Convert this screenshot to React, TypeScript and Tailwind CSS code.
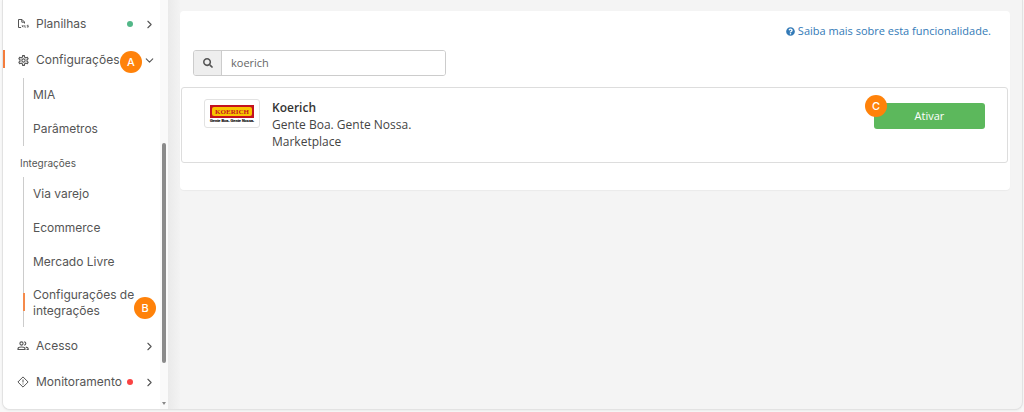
import { useState } from 'react'
import type { ReactNode } from 'react'
import { ChevronDown, ChevronRight } from 'lucide-react'
import { FaQuestionCircle, FaSearch } from 'react-icons/fa'
import { MdOutlineSettings } from 'react-icons/md'
import { clsx } from 'clsx'

function SheetIcon() {
  return (
    <svg viewBox="0 0 12 12" className="w-3 h-3" fill="none" stroke="currentColor">
      <path d="M4 9.500H1.500V1.500h3.500L7.500 4v1.500M4.800 1.500V4.200H7.500" />
      <path d="M5 7.200l1.400 2M6.400 7.200l-1.400 2M7.800 7v2.200h1M11.500 7.300h-1.300v.8h1.100v1h-1.400" strokeWidth=".8" />
    </svg>
  )
}

function PeopleIcon() {
  return (
    <svg viewBox="0 0 12 12" className="w-3 h-3" fill="none" stroke="currentColor" strokeWidth="1.100">
      <circle cx="4.500" cy="3.500" r="1.600" />
      <path d="M1 9.500V8.700C1 7.500 3 7 4.500 7S8 7.500 8 8.700v.8z" />
      <path d="M7.200 1.900a1.600 1.600 0 0 1 0 3.200M8.800 7.100c1.300.2 2.400.8 2.400 1.700v.7H9.500" />
    </svg>
  )
}

function AlertIcon() {
  return (
    <svg viewBox="0 0 12 12" className="w-3 h-3" fill="none" stroke="currentColor">
      <path d="M6 .9 11.100 6 6 11.100 .9 6z" strokeLinejoin="round" />
      <path d="M6 3.500v3M6 7.500v1" />
    </svg>
  )
}

function KoerichLogo() {
  return (
    <svg viewBox="0 0 46 18" className="w-[46px] shrink-0" role="img" aria-label="Koerich">
      <rect x="1" width="44" height="13" fill="#c4121f" />
      <rect x="3" y="2" width="40" height="9" rx="2" fill="#f8c400" />
      <text x="23" y="9" textAnchor="middle" fontFamily="Liberation Serif, serif" fontWeight="700" fontSize="7" fill="#c4121f">
        KOERICH
      </text>
      <text x="23" y="17" textAnchor="middle" fontFamily="Liberation Sans, sans-serif" fontWeight="700" fontSize="3.700" fill="#111" stroke="#111" strokeWidth=".2">
        Gente Boa. Gente Nossa.
      </text>
    </svg>
  )
}

function Marker({ children, className }: { children: ReactNode; className: string }) {
  return (
    <span className={clsx('absolute z-10 flex size-[22px] items-center justify-center rounded-full bg-[#ff820a] font-[Inter,sans-serif] text-[11px] font-medium text-white', className)}>
      {children}
    </span>
  )
}

interface MenuItemProps {
  icon: ReactNode
  label: string
  dot?: string
  open?: boolean
  marker?: ReactNode
}

function MenuItem({ icon, label, dot, open, marker }: MenuItemProps) {
  return (
    <div className="relative">
      <button type="button" aria-expanded={!!open} className="flex h-9 w-full items-center pl-3.5 pr-1">
        <span className="flex w-[19px] shrink-0">{icon}</span>
        <span className="flex-1 text-left">{label}</span>
        {dot && <span className={clsx('mr-2.5 size-1.5 rounded-full', dot)} />}
        {open ? <ChevronDown size={13} /> : <ChevronRight size={13} />}
      </button>
      {open && <span className="absolute left-0 top-2 h-[18px] w-0.5 bg-[#f47c3c]" />}
      {marker}
    </div>
  )
}

function SubItem({ children, active }: { children: ReactNode; active?: boolean }) {
  return (
    <li className="relative">
      <a href="#" className={clsx('block pl-[9px]', active ? 'py-2 leading-4' : 'leading-[34px]')}>
        {children}
      </a>
      {active && <span className="absolute -left-px top-[14px] h-[18px] w-0.5 bg-[#f58a4b]" />}
    </li>
  )
}

function Sidebar() {
  return (
    <aside className="flex w-[165px] shrink-0 bg-white font-[Inter,sans-serif] text-xs text-[#555]">
      <nav className="min-w-0 flex-1 pt-1.5 pb-[9px]">
        <MenuItem icon={<SheetIcon />} label="Planilhas" dot="bg-[#52b788]" />
        <MenuItem
          icon={<MdOutlineSettings size={13} />}
          label="Configurações"
          open
          marker={<Marker className="right-[18px] top-[9px]">A</Marker>}
        />
        <ul className="ml-5 border-l border-[#ccc]">
          <SubItem>MIA</SubItem>
          <SubItem>Parâmetros</SubItem>
        </ul>
        <h2 className="pl-[17px] pt-[9px] pb-1.5 text-[10px] leading-4">Integrações</h2>
        <ul className="mb-px ml-5 border-l border-[#ccc]">
          <SubItem>Via varejo</SubItem>
          <SubItem>Ecommerce</SubItem>
          <SubItem>Mercado Livre</SubItem>
          <SubItem active>
            Configurações de
            <br />
            integrações
            <Marker className="right-1 top-[18px]">B</Marker>
          </SubItem>
        </ul>
        <MenuItem icon={<PeopleIcon />} label="Acesso" />
        <MenuItem icon={<AlertIcon />} label="Monitoramento" dot="bg-[#fa4343]" />
      </nav>
      {/* Scrollbar */}
      <div className="flex w-2 shrink-0 flex-col items-center bg-[#fafafa]">
        <div className="mt-[143px] h-[220px] w-1 rounded-full bg-[#8b8b8b]" />
        <svg viewBox="0 0 4 3" className="mt-auto mb-1 w-1 fill-[#888]">
          <path d="M0 0h4L2 3z" />
        </svg>
      </div>
    </aside>
  )
}

export default function App() {
  const [search, setSearch] = useState('koerich')

  return (
    <div className="min-h-screen bg-[#f8f8f8] pl-0.5 pr-px">
      <div className="flex overflow-hidden rounded-b-lg border border-t-0 border-[#e2e2e2] bg-[#f4f4f4] shadow-xs">
        <Sidebar />
        <div className="w-3 shrink-0 bg-linear-to-r from-[#eaeaea] to-[#f3f3f3]" />
        <main className="min-w-0 flex-1 pt-[11px] pr-3 font-['Open_Sans','Noto_Sans',sans-serif] text-xs text-[#333]">
          <section className="rounded-sm bg-white pl-px pr-0.5 pb-[27px] shadow-[0_1px_1px_rgba(0,0,0,0.04)]">
            <div className="flex justify-end pt-3 pr-[17px]">
              <a href="#" className="flex items-center gap-[3px] text-[11px] leading-4 text-[#337ab7]">
                <FaQuestionCircle size={9} />
                Saiba mais sobre esta funcionalidade.
              </a>
            </div>
            <div className="mt-[11px] ml-3 flex h-[26px] w-[253px] overflow-hidden rounded-[3px] border border-[#ccc]">
              <label htmlFor="search" aria-label="Buscar" className="flex w-7 shrink-0 items-center justify-center border-r border-[#ccc] bg-[#eee]">
                <FaSearch size={10} className="text-[#555]" />
              </label>
              <input
                id="search"
                type="text"
                value={search}
                onChange={e => setSearch(e.target.value)}
                className="min-w-0 flex-1 bg-white px-[9px] text-[11px] text-[#666] outline-none"
              />
            </div>
            <article className="mt-[11px] flex items-start rounded-[3px] border border-[#ddd] px-[22px] pt-[11px] pb-3">
              <div className="flex h-[29px] w-14 shrink-0 items-center justify-center rounded-[3px] border border-[#e2e2e2] bg-white">
                <KoerichLogo />
              </div>
              <div className="ml-3 flex-1 leading-[17px] text-[#444]">
                <h3 className="font-semibold text-[#333]">Koerich</h3>
                <p>Gente Boa. Gente Nossa.</p>
                <p>Marketplace</p>
              </div>
              <div className="relative mt-1 w-[111px]">
                <button type="button" className="h-[26px] w-full rounded-[3px] bg-[#5cb85c] text-[11px] text-white">
                  Ativar
                </button>
                <Marker className="-left-[9px] -top-2">C</Marker>
              </div>
            </article>
          </section>
        </main>
      </div>
    </div>
  )
}
